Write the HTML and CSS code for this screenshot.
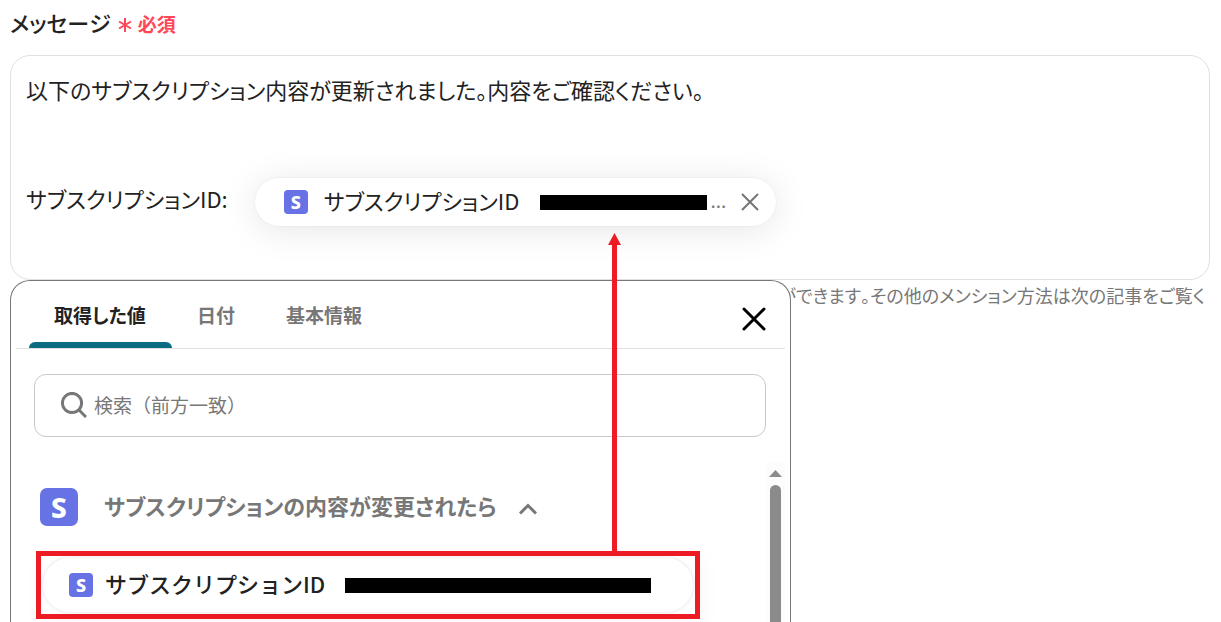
FILE: index.html
```html
<!DOCTYPE html>
<html lang="ja">
<head>
<meta charset="utf-8">
<meta name="viewport" content="width=device-width, initial-scale=1">
<title>メッセージ</title>
<link rel="stylesheet" href="styles.css">
</head>
<body>
<main class="page">
  <section class="field">
    <h1 class="field-label">メッセージ
      <span class="required">
        <svg class="required-mark" viewBox="0 0 14 16" aria-hidden="true"><path d="M7 1v14M1 4.500l12 7M13 4.500l-12 7"/></svg>
        必須
      </span>
    </h1>
    <div class="editor" role="textbox" aria-label="メッセージ">
      <p class="editor-line">以下のサブスクリプション内容が更新されました。内容をご確認ください。</p>
      <div class="editor-row">
        <span class="editor-key">サブスクリプションID:</span>
        <span class="chip">
          <span class="logo logo-small">S</span>
          <span class="chip-name">サブスクリプションID</span>
          <span class="redacted redacted-short"></span>
          <span class="ellipsis">...</span>
          <button class="chip-remove" type="button" aria-label="削除">
            <svg viewBox="0 0 20 20" aria-hidden="true"><path d="M2 2l16 16M18 2L2 18"/></svg>
          </button>
        </span>
      </div>
    </div>
    <p class="help">ができます。その他のメンション方法は次の記事をご覧く</p>
  </section>

  <section class="popover">
    <header class="popover-head">
      <nav class="tabs">
        <button class="tab tab-active" type="button">取得した値</button>
        <button class="tab" type="button">日付</button>
        <button class="tab" type="button">基本情報</button>
      </nav>
      <button class="close" type="button" aria-label="閉じる">
        <svg viewBox="0 0 24 24" aria-hidden="true"><path d="M2 2l20 20M22 2L2 22"/></svg>
      </button>
    </header>
    <label class="search">
      <svg class="search-icon" viewBox="0 0 26 26" aria-hidden="true"><circle cx="11" cy="11" r="9.6"/><path d="M18 18l7 7"/></svg>
      <input class="search-input" type="text" placeholder="検索（前方一致）" aria-label="検索（前方一致）">
    </label>
    <div class="results">
      <div class="results-list">
        <button class="group" type="button">
          <span class="logo logo-large">S</span>
          <span class="group-name">サブスクリプションの内容が変更されたら</span>
          <svg class="chevron" viewBox="0 0 18 12" aria-hidden="true"><path d="M1 10.500l8-8 8 8"/></svg>
        </button>
        <div class="highlight">
          <button class="option" type="button">
            <span class="logo logo-small">S</span>
            <span class="option-name">サブスクリプションID</span>
            <span class="redacted redacted-long"></span>
          </button>
        </div>
      </div>
      <div class="scrollbar" aria-hidden="true">
        <svg class="scroll-up" viewBox="0 0 13 7"><path d="M0 7L6.500 0L13 7z"/></svg>
        <div class="scroll-thumb"></div>
      </div>
    </div>
  </section>

  <div class="arrow" aria-hidden="true">
    <svg class="arrow-head" viewBox="0 0 13 12"><path d="M6.500 0L13 12H0z"/></svg>
    <div class="arrow-shaft"></div>
  </div>
</main>
</body>
</html>
```
FILE: styles.css
```css
* {
  box-sizing: border-box;
}

body {
  margin: 0;
  background: #fff;
  color: #222;
  font-family: "Noto Sans CJK JP", sans-serif;
  font-feature-settings: "palt";
  font-kerning: none;
}

button {
  border: 0;
  padding: 0;
  background: none;
  color: inherit;
  font: inherit;
  font-feature-settings: inherit;
  font-kerning: inherit;
  cursor: pointer;
}

svg {
  display: block;
  fill: none;
  stroke: currentColor;
}

.page {
  position: relative;
  height: 100vh;
  overflow: hidden;
}

.field {
  padding: 6px 11px 0 10px;
}

.field-label {
  display: flex;
  align-items: center;
  gap: 7px;
  margin: 0 0 17px;
  font-size: 22px;
  font-weight: 500;
  line-height: 32px;
}

.required {
  display: flex;
  align-items: center;
  gap: 6px;
  padding-top: 3px;
  color: #ff4757;
  font-size: 19px;
  font-weight: 700;
  line-height: 29px;
}

.required-mark {
  width: 14px;
  height: 16px;
  margin-top: 3px;
  stroke-width: 2;
}

.editor {
  min-height: 225px;
  padding: 16px 15px;
  border: 1px solid #e0e0e0;
  border-radius: 20px;
  font-size: 22px;
  line-height: 34px;
}

.editor-line {
  margin: 0 0 72px;
}

.editor-row {
  display: flex;
  align-items: center;
  gap: 27px;
}

.editor-key {
  padding-bottom: 8px;
}

.chip {
  display: flex;
  align-items: center;
  height: 48px;
  padding: 0 16px 0 29px;
  border-radius: 24px;
  background: #fff;
  box-shadow: 0 0 2px rgba(0, 0, 0, 0.08), 0 4px 36px rgba(0, 0, 0, 0.1);
}

.chip-name {
  margin: 0 21px 0 16px;
  padding-bottom: 4px;
}

.logo {
  display: flex;
  flex: none;
  align-items: center;
  justify-content: center;
  background: #6772e5;
  color: #fff;
  font-family: "Noto Sans", sans-serif;
  font-weight: 800;
}

.logo-small {
  width: 24px;
  height: 24px;
  border-radius: 4px;
  font-size: 18px;
  line-height: 24px;
}

.logo-large {
  width: 38px;
  height: 38px;
  border-radius: 7px;
  font-size: 28px;
  line-height: 38px;
}

.redacted {
  height: 15px;
  background: #000;
}

.redacted-short {
  width: 167px;
}

.redacted-long {
  width: 306px;
}

.ellipsis {
  width: 24px;
  padding: 0 0 4px 3px;
  color: #777;
  font-size: 19px;
}

.chip-remove {
  margin-left: 9px;
  color: #757575;
}

.chip-remove svg {
  width: 20px;
  height: 20px;
  stroke-width: 2;
}

.help {
  display: flex;
  justify-content: flex-end;
  margin: 2px 5px 0 0;
  color: #777;
  font-size: 18px;
  line-height: 26px;
  white-space: nowrap;
}

.popover {
  position: absolute;
  top: 280px;
  bottom: 0;
  left: 10px;
  display: flex;
  flex-direction: column;
  width: 64%;
  overflow: hidden;
  border: 1px solid #777;
  border-bottom: 0;
  border-radius: 20px 20px 0 0;
  background: #fff;
}

.popover-head {
  display: flex;
  align-items: stretch;
  justify-content: space-between;
  flex: none;
  height: 68px;
  margin: 0 5px;
  padding: 0 19px 0 13px;
  border-bottom: 1px solid #e0e0e0;
}

.tabs {
  display: flex;
}

.tab {
  position: relative;
  padding: 0 26px 0 25px;
  color: #777;
  font-size: 19px;
  font-weight: 700;
}

.tab-active {
  color: #222;
}

.tab-active::after {
  content: "";
  position: absolute;
  right: 0;
  bottom: 0;
  left: 0;
  height: 6px;
  border-radius: 6px 6px 0 0;
  background: #0b6b83;
}

.close {
  padding-top: 8px;
  color: #000;
}

.close svg {
  width: 24px;
  height: 24px;
  stroke-linecap: round;
  stroke-width: 3;
}

.search {
  display: flex;
  align-items: center;
  flex: none;
  gap: 7px;
  height: 63px;
  margin: 25px 24px 0 23px;
  padding: 0 26px 2px;
  border: 1px solid #c8c8c8;
  border-radius: 12px;
}

.search-icon {
  flex: none;
  width: 26px;
  height: 26px;
  color: #777;
  stroke-width: 3;
}

.search-input {
  flex: 1;
  border: 0;
  outline: 0;
  padding: 0;
  background: none;
  font: inherit;
  font-size: 19px;
  font-feature-settings: normal;
}

.search-input::placeholder {
  color: #777;
  opacity: 1;
}

.results {
  display: flex;
  flex: 1;
  min-height: 0;
  margin-top: 25px;
}

.results-list {
  flex: 1;
  padding: 26px 66px 0 25px;
}

.group {
  display: flex;
  align-items: center;
  height: 38px;
  margin: 0 0 25px 4px;
  color: #777;
  font-size: 22px;
  font-weight: 700;
}

.group .logo {
  margin-right: 26px;
}

.group-name,
.option-name {
  padding-bottom: 4px;
}

.chevron {
  width: 18px;
  height: 12px;
  margin: 3px 0 0 22px;
  stroke-width: 3;
}

.highlight {
  padding: 2px;
  border: 5px solid #ed1c24;
  box-shadow: 4px 8px 20px rgba(0, 0, 0, 0.03);
}

.option {
  display: flex;
  align-items: center;
  width: 100%;
  height: 54px;
  padding: 0 26px;
  border-radius: 27px;
  background: #fff;
  box-shadow: 0 0 5px rgba(0, 0, 0, 0.12);
  font-size: 22px;
  font-weight: 500;
}

.option .logo {
  margin-right: 12px;
}

.option-name {
  font-feature-settings: normal;
}

.option .redacted {
  margin-left: 20px;
}

.scrollbar {
  display: flex;
  align-items: center;
  flex: none;
  flex-direction: column;
  gap: 8px;
  width: 19px;
  margin-right: 5px;
  padding-top: 8px;
  background: #fcfcfc;
}

.scroll-up {
  width: 13px;
  height: 7px;
  fill: #8b8b8b;
  stroke: none;
}

.scroll-thumb {
  flex: 1;
  width: 11px;
  border-radius: 6px 6px 0 0;
  background: #8b8b8b;
}

.arrow {
  position: absolute;
  top: 233px;
  left: 608px;
  display: flex;
  align-items: center;
  flex-direction: column;
  width: 13px;
  height: 319px;
}

.arrow-head {
  width: 13px;
  height: 12px;
  fill: #ed1c24;
  stroke: none;
}

.arrow-shaft {
  flex: 1;
  width: 5px;
  background: #ed1c24;
}
```
